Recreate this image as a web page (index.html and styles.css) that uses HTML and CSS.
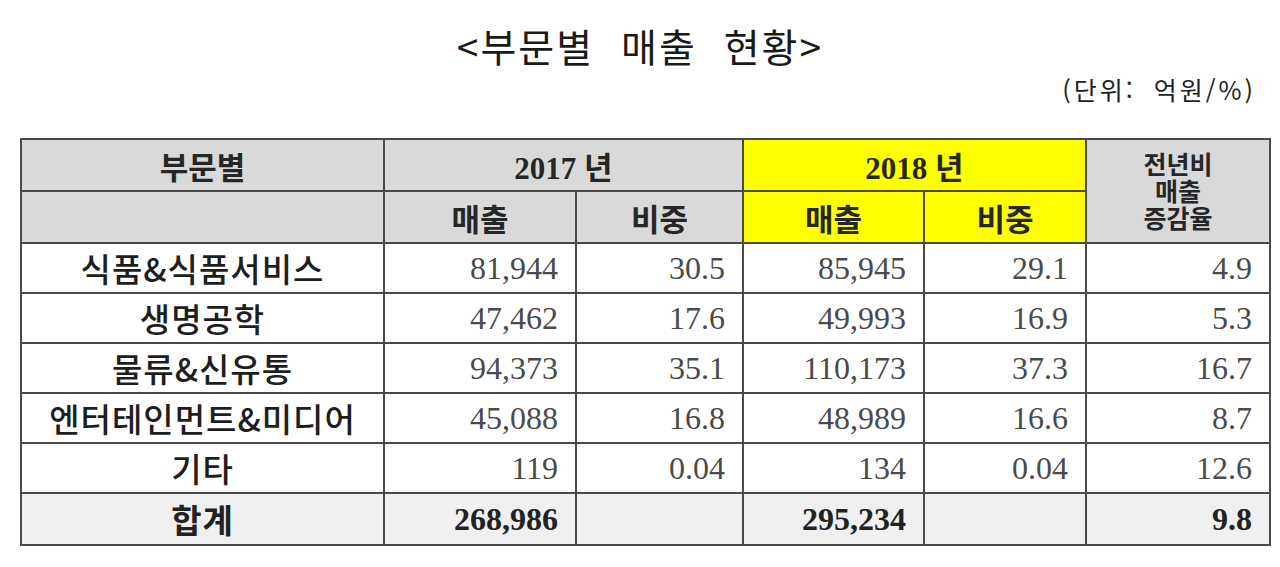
FILE: index.html
```html
<!DOCTYPE html>
<html lang="ko">
<head>
<meta charset="utf-8">
<link rel="stylesheet" href="styles.css">
</head>
<body>
<div class="page">
  <h1 class="title">&lt;부문별 매출 현황&gt;</h1>
  <div class="unit">(단위: 억원/%)</div>
  <table class="sales">
    <colgroup>
      <col class="c1"><col class="c2"><col class="c3"><col class="c4"><col class="c5"><col class="c6">
    </colgroup>
    <thead>
      <tr class="h1">
        <th class="gray name">부문별</th>
        <th class="gray" colspan="2">2017 년</th>
        <th class="yellow" colspan="2">2018 년</th>
        <th class="gray multi" rowspan="2"><span class="ln">전년비</span><span class="ln">매출</span><span class="ln">증감율</span></th>
      </tr>
      <tr class="h2">
        <th class="gray"></th>
        <th class="gray">매출</th>
        <th class="gray">비중</th>
        <th class="yellow">매출</th>
        <th class="yellow">비중</th>
      </tr>
    </thead>
    <tbody>
      <tr><td class="name">식품&amp;식품서비스</td><td>81,944</td><td>30.5</td><td>85,945</td><td>29.1</td><td>4.9</td></tr>
      <tr><td class="name">생명공학</td><td>47,462</td><td>17.6</td><td>49,993</td><td>16.9</td><td>5.3</td></tr>
      <tr><td class="name">물류&amp;신유통</td><td>94,373</td><td>35.1</td><td>110,173</td><td>37.3</td><td>16.7</td></tr>
      <tr><td class="name">엔터테인먼트&amp;미디어</td><td>45,088</td><td>16.8</td><td>48,989</td><td>16.6</td><td>8.7</td></tr>
      <tr><td class="name">기타</td><td>119</td><td>0.04</td><td>134</td><td>0.04</td><td>12.6</td></tr>
      <tr class="total"><td class="name">합계</td><td>268,986</td><td></td><td>295,234</td><td></td><td>9.8</td></tr>
    </tbody>
  </table>
</div>
</body>
</html>
```
FILE: styles.css
```css
html, body {
  margin: 0;
  padding: 0;
  background: #ffffff;
}
.page {
  width: 1280px;
  height: 567px;
  padding: 20px 0 0 0;
  box-sizing: border-box;
  font-family: "Liberation Serif", "Noto Sans CJK KR", serif;
  color: #222;
}
.title {
  margin: 0;
  text-align: center;
  font-family: "Noto Sans CJK KR", sans-serif;
  font-weight: 400;
  font-size: 39px;
  line-height: 50px;
  letter-spacing: 2px;
  word-spacing: 14px;
  color: #1a1a1a;
}
.unit {
  margin: 3px 24px 0 0;
  text-align: right;
  font-family: "Noto Sans CJK KR", sans-serif;
  font-size: 25px;
  line-height: 32px;
  letter-spacing: 3px;
  word-spacing: 8px;
  color: #222;
}
.sales {
  margin: 33px 0 0 20px;
  width: 1249px;
  border-collapse: collapse;
  table-layout: fixed;
  border: 2px solid #8a8a8a;
}
.c1 { width: 363px; }
.c2 { width: 192px; }
.c3 { width: 167px; }
.c4 { width: 181px; }
.c5 { width: 162px; }
.c6 { width: 184px; }
.sales th, .sales td {
  border: 2px solid #4a4a4a;
  padding: 0;
}
.sales th {
  height: 50px;
  font-weight: 700;
  font-size: 31px;
  text-align: center;
  color: #262626;
  font-family: "Liberation Serif", "Noto Sans CJK KR", serif;
}
.sales th.gray { background: #d9d9d9; }
.sales th.yellow { background: #ffff00; }
.sales th.multi {
  font-size: 25px;
  padding-top: 2px;
}
.sales th.multi .ln {
  display: block;
  height: 27px;
  line-height: 27px;
}
.sales td {
  height: 48px;
  text-align: right;
  padding-right: 17px;
  font-size: 32px;
  color: #4a4a4a;
  font-weight: 400;
}
.sales td.name {
  text-align: center;
  padding-right: 0;
  font-family: "Noto Sans CJK KR", sans-serif;
  font-weight: 500;
  font-size: 33px;
  letter-spacing: 1px;
  color: #1e1e1e;
}
.sales tr.total td {
  background: #f0f0f0;
  font-weight: 700;
  color: #222;
  height: 50px;
}
```
